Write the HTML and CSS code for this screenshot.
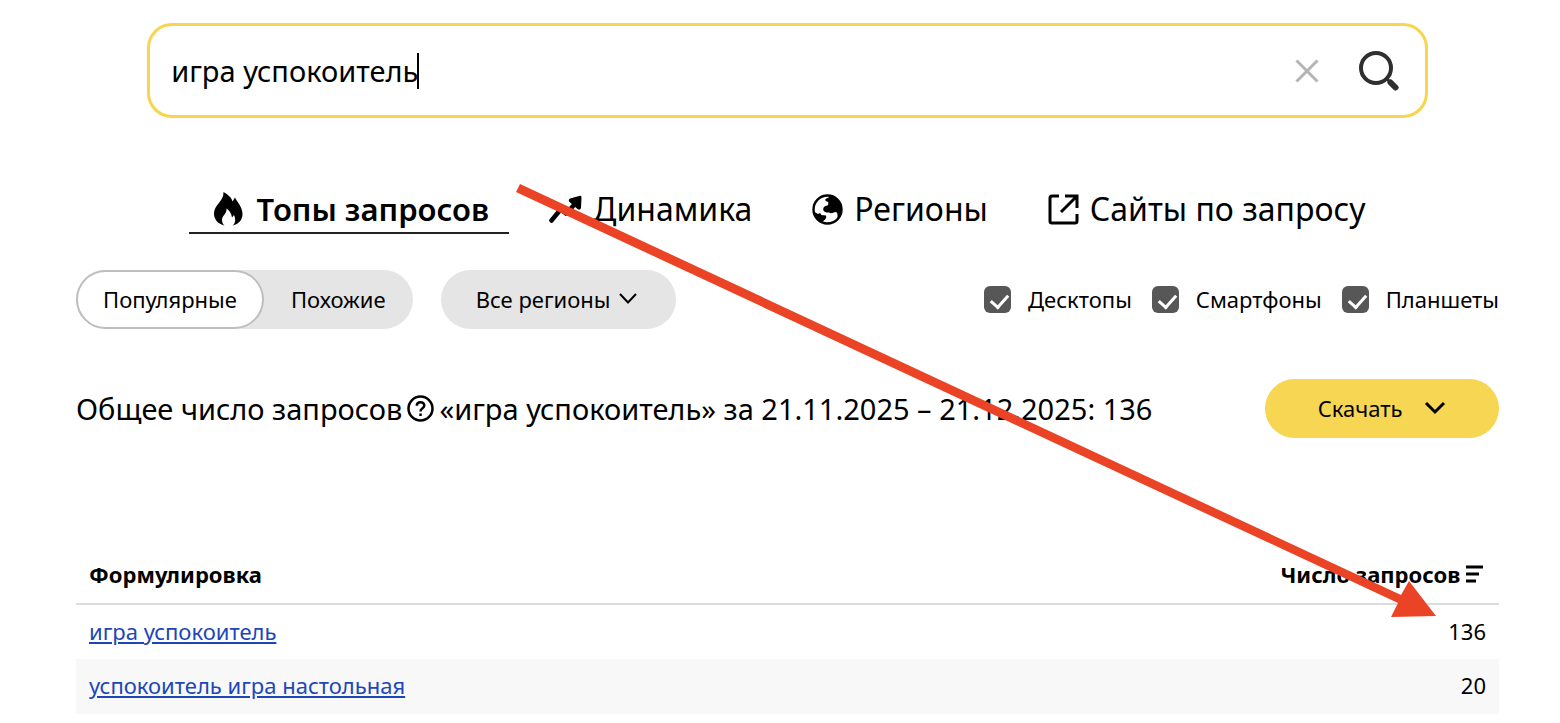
FILE: index.html
```html
<!DOCTYPE html>
<html lang="ru">
<head>
  <meta charset="UTF-8" />
  <meta name="viewport" content="width=device-width, initial-scale=1.0" />
  <title>Вордстат</title>
  <link rel="stylesheet" href="styles.css">
</head>
<body>

  <form class="search" onsubmit="return false">
    <div class="search-field">
      <input class="search-input" type="text" value="игра успокоитель" aria-label="Запрос" />
      <span class="caret"></span>
    </div>
    <button type="button" class="icon-btn" aria-label="Очистить">
      <svg width="24" height="24" viewBox="0 0 24 24"><path d="M1.500 1.500L22.500 22.500M22.500 1.500L1.500 22.500" fill="none" stroke="#b4b4b4" stroke-width="3" /></svg>
    </button>
    <button type="submit" class="icon-btn find" aria-label="Найти">
      <svg width="40" height="40" viewBox="0 0 40 40" fill="none" stroke="#2f2f2f"><circle cx="17" cy="17" r="15" stroke-width="4" /><path d="M27 27l4 4" stroke-width="3" /><path d="M31.500 31.500l5 5" stroke-width="6" stroke-linecap="round" /></svg>
    </button>
  </form>

  <nav class="tabs">
    <a href="#top" class="tab active">
      <svg width="29" height="34" viewBox="0 0 29 34"><path d="M9.500 0C14 2.500 18 6 18.500 9.500L21 5.500C23 10 28.500 14.500 28.500 22C28.500 28 24.500 32 19 33.500C21.500 30.500 22 27 20 23L18 25.500C17.500 21 15 18.500 12.500 16.500C13 22 8 23.500 8 28C8 30.500 9 32.500 10.500 33.500C4 32 0 27.500 0 21.500C0 13 10 9 9.500 0Z" /></svg>
      Топы запросов
    </a>
    <a href="#dynamics" class="tab">
      <svg width="33" height="30" viewBox="0 0 33 30"><path d="M2.500 26.500L12 15L17 19.500L26 10" fill="none" stroke="#000" stroke-width="4.500" stroke-linecap="round" stroke-linejoin="round" /><path d="M20 7.500Q19 5 22 4.300L31 1.800Q32.500 1.500 32.500 3.500L32 14Q31 17 28.500 15Z" /></svg>
      Динамика
    </a>
    <a href="#regions" class="tab">
      <svg width="31" height="31" viewBox="0 0 31 31"><circle cx="15.500" cy="15.500" r="14" fill="#fff" stroke="#000" stroke-width="2.400" /><path d="M18 2C26 3 30 9 29.500 16C29.500 20 28 23 25.500 25C25.500 22 26 19 24 18C21 18.500 19 20 17 18.500C12 19 10 16 12 13C14 11 17 12 16 10C18 8 14 7.500 13 6C14 4 17 4 18 2ZM2.500 18L6 20C8 18 10 20 9 21L14 21.500C15 24 13 26 10 28C6 26 3 22 2.500 18Z" /></svg>
      Регионы
    </a>
    <a href="#sites" class="tab">
      <svg width="31" height="31" viewBox="0 0 31 31" fill="none" stroke="#000" stroke-width="3"><path d="M11 2H4Q2 2 2 4V27Q2 29 4 29H27Q29 29 29 27V20M17 2H29V14M28 3L13 18" /></svg>
      Сайты по запросу
    </a>
  </nav>

  <div class="filters">
    <div class="segment">
      <button type="button" class="segment-btn selected">Популярные</button>
      <button type="button" class="segment-btn">Похожие</button>
    </div>
    <button type="button" class="regions">
      Все регионы
      <svg width="18" height="11" viewBox="0 0 18 11"><path d="M1 1L9 9.500L17 1" fill="none" stroke="#000" stroke-width="2" /></svg>
    </button>
    <div class="devices">
      <label class="device"><input type="checkbox" checked /> Десктопы</label>
      <label class="device"><input type="checkbox" checked /> Смартфоны</label>
      <label class="device"><input type="checkbox" checked /> Планшеты</label>
    </div>
  </div>

  <div class="summary">
    <div class="total">
      <span>Общее число запросов</span>
      <svg width="27" height="27" viewBox="0 0 27 27" fill="none" stroke="#000" stroke-width="2.500"><circle cx="13.500" cy="13.500" r="12" /><path d="M9.800 10.800C9.800 6 17.300 6 17.300 10.500C17.300 13.500 13.500 13 13.500 16.500M13.500 18.500V21" /></svg>
      <span>«игра успокоитель» за 21.11.2025 – 21.12.2025: 136</span>
    </div>
    <button type="button" class="download">
      Скачать
      <svg width="22" height="14" viewBox="0 0 22 14"><path d="M2 2L11 11L20 2" fill="none" stroke="#000" stroke-width="3" /></svg>
    </button>
  </div>

  <table class="queries">
    <thead>
      <tr>
        <th>Формулировка</th>
        <th class="count">
          Число запросов
          <svg width="17" height="18" viewBox="0 0 17 18"><path d="M0 2H17M0 9H13M0 16H10" stroke="#000" stroke-width="3" /></svg>
        </th>
      </tr>
    </thead>
    <tbody>
      <tr>
        <td><a href="#q1">игра успокоитель</a></td>
        <td class="count">136</td>
      </tr>
      <tr>
        <td><a href="#q2">успокоитель игра настольная</a></td>
        <td class="count">20</td>
      </tr>
    </tbody>
  </table>

  <!-- arrow drawn over the page, points at the first count -->
  <svg class="arrow" width="924" height="440" viewBox="0 0 924 440" fill="#ea4325">
    <path d="M7 0L888 411L896 397L923 432L878 433L885 419L3 8Z" />
  </svg>

</body>
</html>
```

FILE: styles.css
```css
* {
  box-sizing: border-box;
}

body {
  position: relative;
  margin: 0;
  padding: 23px 61px 10px 76px;
  background: #fff;
  color: #000;
  font-family: "Noto Sans", sans-serif;
  font-size: 22px;
  line-height: 30px;
}

button {
  border: none;
  background: none;
  padding: 0;
  color: inherit;
  font: inherit;
  cursor: pointer;
}

svg {
  flex: none;
}

.search {
  display: flex;
  align-items: center;
  width: 90%;
  height: 95px;
  margin: 0 auto;
  padding: 0 26px 0 21px;
  border: 3px solid #f7d54f;
  border-radius: 25px;
}

.search-field {
  position: relative;
  flex: 1;
}

.search-input {
  display: block;
  width: 100%;
  padding: 0;
  border: none;
  outline: none;
  background: none;
  color: inherit;
  font: inherit;
  font-size: 29px;
  line-height: 40px;
}

.caret {
  position: absolute;
  left: 246px;
  top: 2px;
  width: 2px;
  height: 36px;
  background: #000;
}

.icon-btn {
  display: flex;
}

.find {
  margin-left: 40px;
}

.tabs {
  display: flex;
  justify-content: center;
  gap: 15px;
  margin-top: 68px;
}

.tab {
  display: flex;
  align-items: center;
  gap: 11px;
  height: 48px;
  padding: 0 20px 0 25px;
  border-bottom: 2px solid transparent;
  color: inherit;
  font-size: 32px;
  text-decoration: none;
  white-space: nowrap;
}

.tab.active {
  gap: 13px;
  border-color: #222;
  font-size: 31px;
  font-weight: 600;
}

.filters {
  display: flex;
  align-items: center;
  margin-top: 36px;
}

.segment {
  display: flex;
  border-radius: 30px;
  background: #e5e5e5;
}

.segment-btn {
  height: 59px;
  padding: 0 27px 2px;
  border-radius: 30px;
}

.segment-btn.selected {
  padding: 0 25px 2px;
  border: 2px solid #bebebe;
  background: #fff;
}

.regions {
  display: flex;
  align-items: center;
  justify-content: center;
  gap: 8px;
  width: 235px;
  height: 59px;
  margin-left: 28px;
  padding: 0 4px 2px 0;
  border-radius: 30px;
  background: #e5e5e5;
}

.devices {
  display: flex;
  gap: 20px;
  margin-left: auto;
  padding-bottom: 2px;
}

.device {
  display: flex;
  align-items: center;
  gap: 17px;
}

.device input {
  width: 27px;
  height: 27px;
  margin: 2px 0 0;
  border-radius: 6px;
  background: #575757;
  appearance: none;
}

.device input:checked::before {
  content: "";
  display: block;
  width: 8px;
  height: 14px;
  margin: 5px 0 0 10px;
  border: solid #fff;
  border-width: 0 3px 3px 0;
  transform: rotate(42deg);
}

.summary {
  display: flex;
  align-items: center;
  justify-content: space-between;
  margin-top: 50px;
}

.total {
  display: flex;
  align-items: center;
  gap: 5px;
  font-size: 29px;
  white-space: nowrap;
}

.download {
  display: flex;
  align-items: center;
  justify-content: center;
  gap: 22px;
  width: 234px;
  height: 59px;
  padding-bottom: 2px;
  border-radius: 30px;
  background: #f7d653;
}

.queries {
  width: 100%;
  margin-top: 110px;
  border-collapse: collapse;
}

.queries th {
  height: 56px;
  padding: 0 13px 3px;
  border-bottom: 2px solid #dcdcdc;
  font-weight: 700;
  text-align: left;
}

.queries td {
  height: 55px;
  padding: 0 13px 3px;
}

.queries th.count {
  padding-right: 16px;
}

.queries tbody tr:nth-child(even) {
  background: #f8f8f8;
}

.queries .count {
  text-align: right;
}

.queries a {
  color: #1d46b8;
}

.arrow {
  position: absolute;
  left: 513px;
  top: 184px;
  pointer-events: none;
}
```
